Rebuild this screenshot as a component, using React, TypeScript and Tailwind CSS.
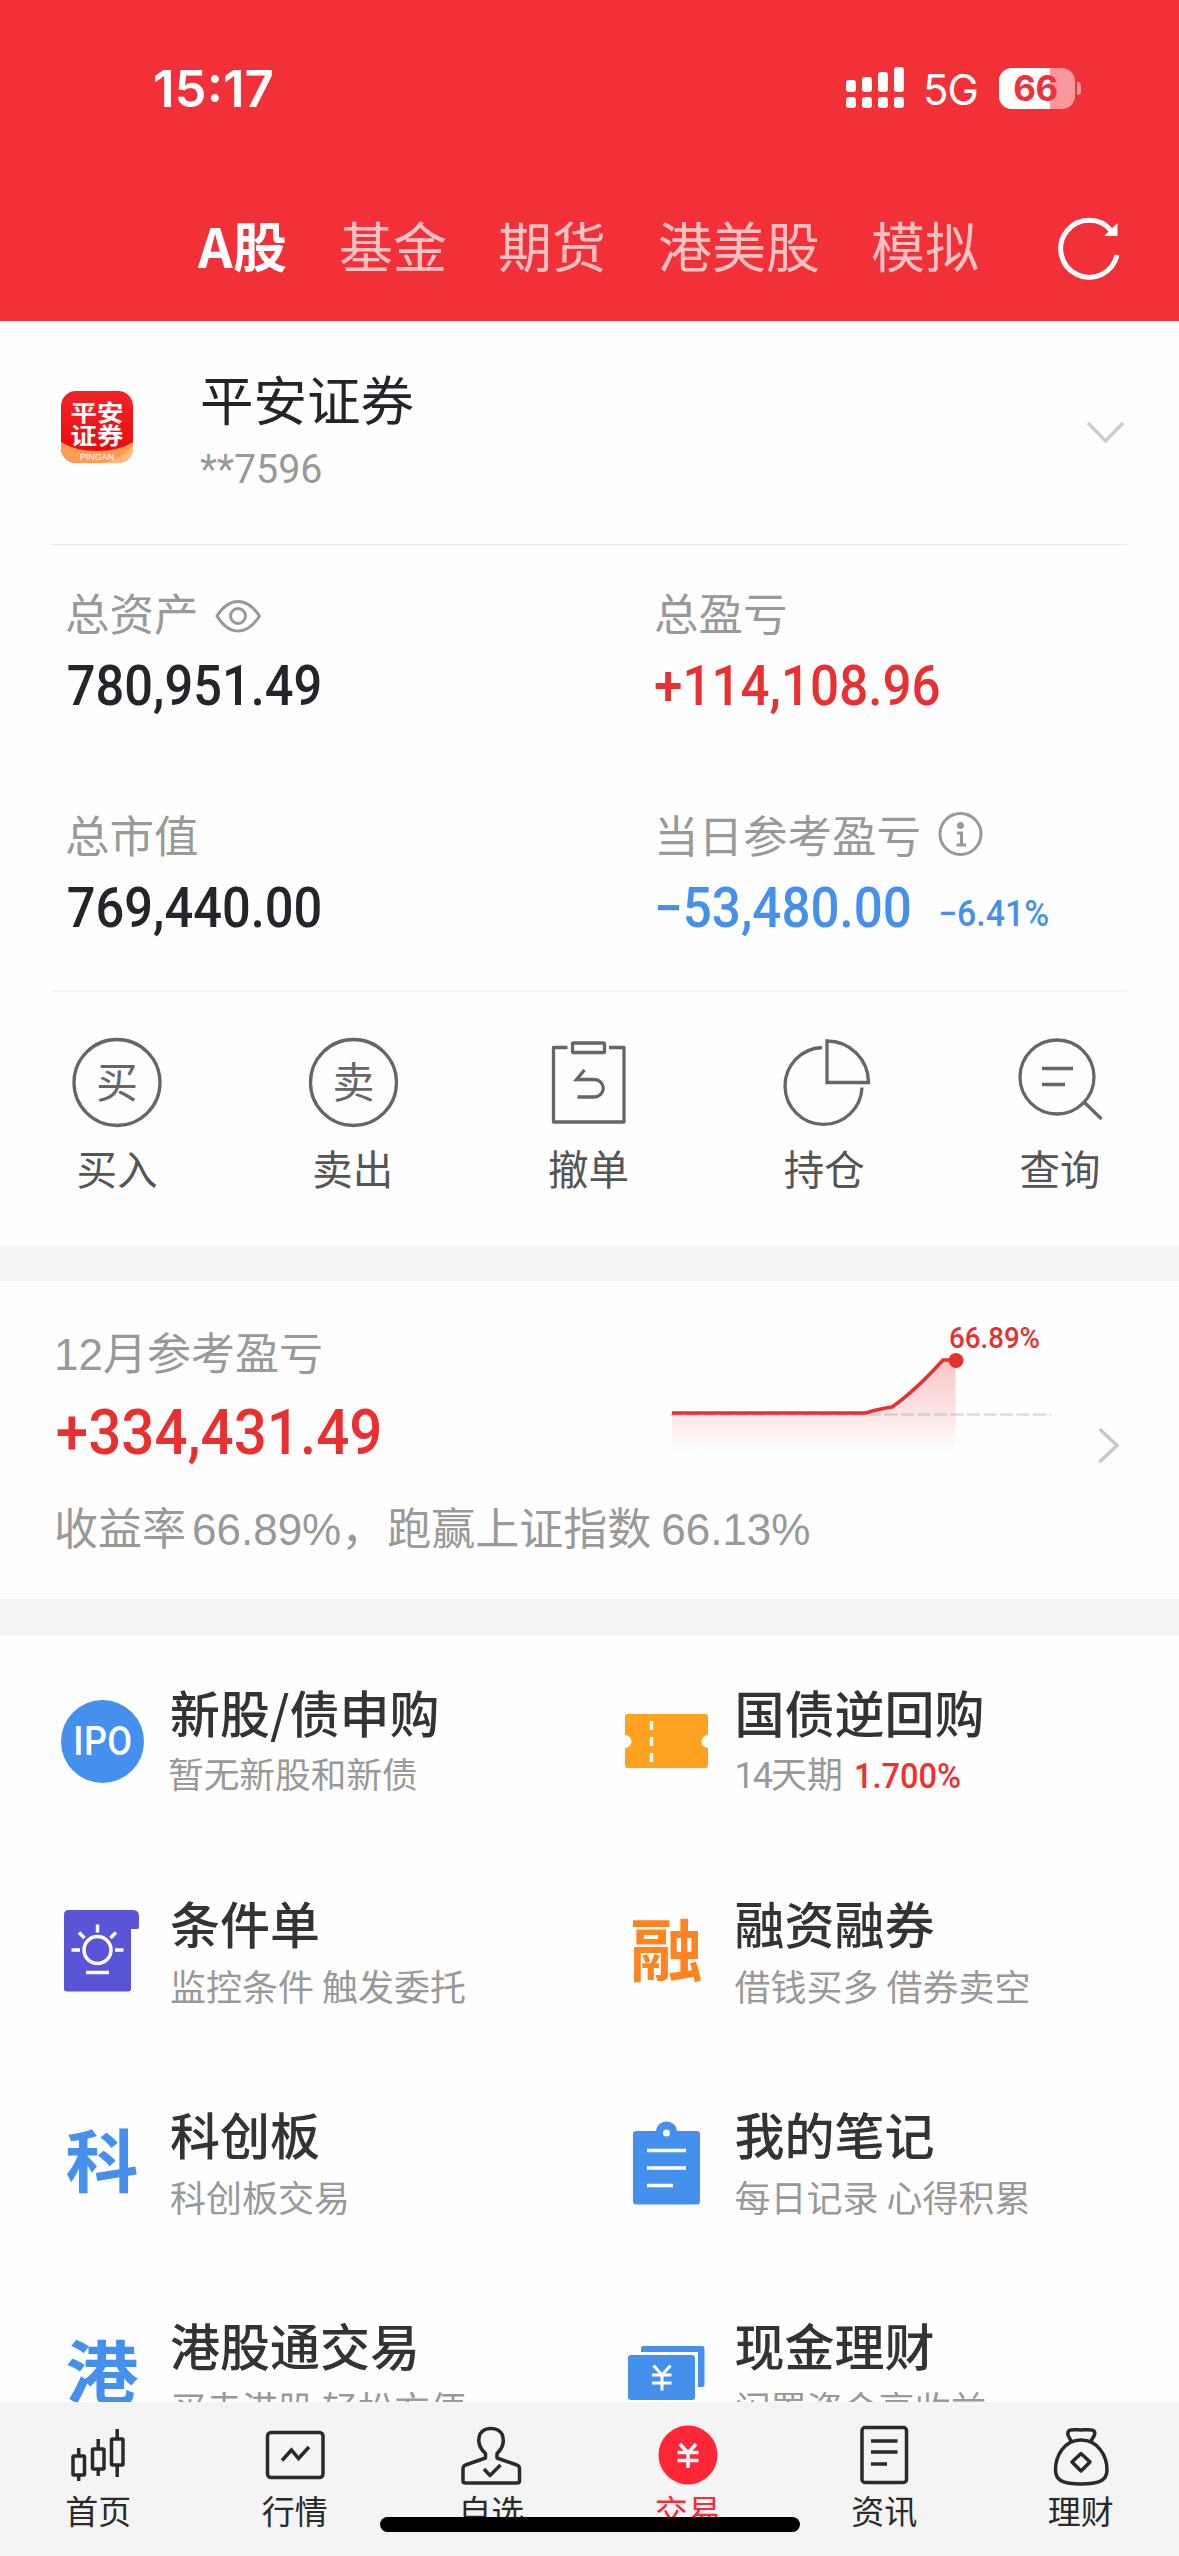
import type { ReactNode } from "react";

const CJK = "font-['Noto_Sans_CJK_SC',sans-serif]";
const DIGITS = "font-['Roboto','Noto_Sans_CJK_SC',sans-serif]";

function StatusBar() {
  return (
    <div className="flex h-[176px] items-center pl-[153px] pr-[98px] font-['Inter',sans-serif] text-white">
      <span className="pt-[2px] text-[51px] font-semibold leading-[60px]">15:17</span>
      <div className="ml-auto flex items-center">
        <svg width="60" height="44" viewBox="845 66 60 44" fill="#fff">
          <rect x="846" y="80" width="10" height="12" rx="3" />
          <rect x="862" y="77" width="10" height="15" rx="3" />
          <rect x="878" y="72" width="10" height="20" rx="3" />
          <rect x="894" y="67" width="10" height="25" rx="3" />
          <rect x="846" y="97" width="10" height="11" rx="3" />
          <rect x="862" y="97" width="10" height="11" rx="3" />
          <rect x="878" y="97" width="10" height="11" rx="3" />
          <rect x="894" y="97" width="10" height="11" rx="3" />
        </svg>
        <span className="ml-[18px] w-[58px] pt-[3px] text-[42px] leading-[48px] tracking-[-1px]">5G</span>
        <div className="relative ml-[18px] h-[41px] w-[76px] overflow-hidden rounded-[13px] bg-white/50">
          <div className="h-full w-[51px] bg-white" />
          <span className="absolute inset-y-0 left-0 w-[73px] text-center text-[35px] font-bold leading-[41px] tracking-[-0.500px] text-[#f13038]">
            66
          </span>
        </div>
        <div className="ml-[2px] h-[13px] w-[4px] rounded-r-full bg-white/50" />
      </div>
    </div>
  );
}

function MarketTabs() {
  return (
    <div className={`flex h-[145px] items-start pl-[198px] pt-[30px] text-[54px] leading-[78px] text-white/70 ${CJK}`}>
      <span className="w-[90px] whitespace-nowrap text-[54px] font-bold tracking-[0.500px] text-white">A股</span>
      <span className="ml-[51px]">基金</span>
      <span className="ml-[51px]">期货</span>
      <span className="ml-[52px]">港美股</span>
      <span className="ml-[51px]">模拟</span>
      <svg className="ml-[77px] mt-[9px]" width="66" height="68" viewBox="1055 215 66 68" fill="none" stroke="#fff" strokeWidth="5">
        <path d="M1110.500 231 A28.500 28.500 0 1 0 1116 255" />
        <path d="M1116.500 223 V236 H1103 Z" fill="#fff" stroke="none" />
      </svg>
    </div>
  );
}

function BrokerLogo() {
  return (
    <div className="relative h-[72px] w-[72px] overflow-hidden rounded-[15px] bg-gradient-to-b from-[#f32226] to-[#ea0008]">
      <svg className="absolute inset-0" width="72" height="72" viewBox="0 0 72 72">
        <path d="M0 51 Q14 60 36 60 Q58 60 72 51 V72 H0 Z" fill="#ff9c50" />
        <path d="M44 72 Q62 68 72 54 V72 Z" fill="#ffbd7d" />
      </svg>
      <div className={`absolute inset-x-0 top-[8px] flex origin-top scale-y-[0.860] flex-col items-center text-[26.500px] font-bold leading-[27px] text-white ${CJK}`}>
        <span>平安</span>
        <span>证券</span>
      </div>
      <div className="absolute inset-x-0 bottom-[1px] text-center font-['Liberation_Sans',sans-serif] text-[9px] leading-[10px] text-white">
        PINGAN
      </div>
    </div>
  );
}

function Account() {
  return (
    <div className="mx-[52px] flex h-[224px] border-b border-[#e8e8e8] pl-[9px]">
      <div className="pt-[70px]">
        <BrokerLogo />
      </div>
      <div className="ml-[67px] pt-[37px]">
        <div className={`text-[53.500px] leading-[80px] text-[#22262b] ${CJK}`}>平安证券</div>
        <div className={`origin-left scale-x-[0.96] text-[41px] leading-[62px] text-[#999] ${DIGITS}`}>**7596</div>
      </div>
      <svg className="ml-auto mr-[1px] mt-[97px]" width="42" height="30" viewBox="1084 418 42 30" fill="none" stroke="#ccc" strokeWidth="3.500">
        <path d="M1088 423 L1105.500 441 L1123 423" />
      </svg>
    </div>
  );
}

function Stat({ label, icon, children }: { label: string; icon?: ReactNode; children: ReactNode }) {
  return (
    <div className="h-[222px]">
      <div className={`flex h-[62px] items-center text-[44.500px] leading-[62px] text-[#999] ${CJK}`}>
        {label}
        {icon}
      </div>
      <div className={`flex h-[87px] items-center whitespace-nowrap text-[55px] font-medium leading-[87px] ${DIGITS}`}>
        {children}
      </div>
    </div>
  );
}

function Assets() {
  return (
    <div className="mx-[52px] h-[447px] border-b-2 border-[#f2f2f2]">
      <div className="grid grid-cols-[589px_1fr] pl-[13px] pt-[36px]">
        <Stat
          label="总资产"
          icon={
            <svg className="ml-[14px] mt-[7px]" width="48" height="38" viewBox="213 597 48 38" fill="none" stroke="#999" strokeWidth="3">
              <path d="M217 616 Q226 601.500 238 601.500 Q250 601.500 259.500 616 Q250 631 238 631 Q226 631 217 616 Z" />
              <circle cx="238" cy="616" r="7.500" />
            </svg>
          }
        >
          <span className="origin-left scale-x-[0.92] pl-[2px] text-[#22262b]">780,951.49</span>
        </Stat>
        <Stat label="总盈亏">
          <span className="origin-left scale-x-[0.93] text-[#e93030]">+114,108.96</span>
        </Stat>
        <Stat label="总市值">
          <span className="origin-left scale-x-[0.92] pl-[2px] text-[#22262b]">769,440.00</span>
        </Stat>
        <Stat
          label="当日参考盈亏"
          icon={
            <svg className="ml-[16px]" width="48" height="48" viewBox="937 810 48 48" fill="none" stroke="#999" strokeWidth="3">
              <circle cx="960.500" cy="834" r="20.500" />
              <circle cx="960.500" cy="825.500" r="3.500" fill="#999" stroke="none" />
              <path d="M957 833 H961.500 V844 M956.500 845 H966" />
            </svg>
          }
        >
          <span className="w-[284px] origin-left scale-x-[0.93] text-[#4590ec]">−53,480.00</span>
          <span className="origin-left scale-x-[0.94] pt-[11px] text-[36px] text-[#4590ec]">−6.41%</span>
        </Stat>
      </div>
    </div>
  );
}

const actions: { label: string; icon: ReactNode }[] = [
  {
    label: "买入",
    icon: (
      <svg width="100" height="100" viewBox="68 1032 100 100" fill="none" stroke="#666" strokeWidth="3.300">
        <circle cx="117" cy="1082.500" r="43" />
        <text x="117" y="1098" textAnchor="middle" fontSize="42" fill="#666" stroke="none">买</text>
      </svg>
    ),
  },
  {
    label: "卖出",
    icon: (
      <svg width="100" height="100" viewBox="304 1032 100 100" fill="none" stroke="#666" strokeWidth="3.300">
        <circle cx="353.500" cy="1082.500" r="43" />
        <text x="353.500" y="1098" textAnchor="middle" fontSize="42" fill="#666" stroke="none">卖</text>
      </svg>
    ),
  },
  {
    label: "撤单",
    icon: (
      <svg width="100" height="100" viewBox="539.500 1032 100 100" fill="none" stroke="#666" strokeWidth="3.300">
        <path d="M568 1047.500 H554 V1122 H624.500 V1047.500 H609.500" strokeLinejoin="round" />
        <rect x="573" y="1043" width="32" height="9.500" rx="1" />
        <path d="M585 1070 L577 1079.500 H595 A8.500 8.500 0 0 1 595 1097 H578" />
      </svg>
    ),
  },
  {
    label: "持仓",
    icon: (
      <svg width="100" height="100" viewBox="775 1032 100 100" fill="none" stroke="#666" strokeWidth="3.300">
        <path d="M822 1047.500 A38.500 38.500 0 1 0 862 1087.500" />
        <path d="M827 1041 V1082.500 H868.500 A41.500 41.500 0 0 0 827 1041 Z" />
      </svg>
    ),
  },
  {
    label: "查询",
    icon: (
      <svg width="100" height="100" viewBox="1011 1032 100 100" fill="none" stroke="#666" strokeWidth="3.300">
        <circle cx="1057" cy="1077" r="37" />
        <path d="M1042 1068.500 H1073 M1042 1084.500 H1065 M1084 1102 L1101.500 1119" />
      </svg>
    ),
  },
];

function QuickActions() {
  return (
    <div className={`grid h-[254px] grid-cols-5 pt-[40px] ${CJK}`}>
      {actions.map((a) => (
        <div key={a.label} className="flex flex-col items-center">
          {a.icon}
          <span className="mt-[6px] pr-[2px] text-[40.500px] leading-[60px] text-[#555]">{a.label}</span>
        </div>
      ))}
    </div>
  );
}

function MonthlyProfit() {
  return (
    <div className="flex h-[318px]">
      <div className="w-[610px] pl-[54px] pt-[43px] font-['Liberation_Sans','Noto_Sans_CJK_SC',sans-serif] text-[44px] text-[#999]">
        <div className="leading-[62px]">12月参考盈亏</div>
        <div className={`origin-left scale-x-[0.925] pl-[2px] text-[63px] font-medium leading-[94px] text-[#e93030] ${DIGITS}`}>
          +334,431.49
        </div>
        <div className="flex whitespace-nowrap pt-[19px] leading-[62px]">
          收益率<span className="ml-[6px]">66.89%</span>，
          <span className="ml-[2px]">跑赢上证指数</span>
          <span className="ml-[10px]">66.13%</span>
        </div>
      </div>
      <svg className="mt-[29px]" width="460" height="180" viewBox="610 1310 460 180" fill="none">
        <defs>
          <linearGradient id="profitFill" x1="0" y1="1360" x2="0" y2="1453" gradientUnits="userSpaceOnUse">
            <stop offset="0" stopColor="#e93030" stopOpacity="0.280" />
            <stop offset="1" stopColor="#e93030" stopOpacity="0" />
          </linearGradient>
        </defs>
        <path d="M670 1414.500 H1051" stroke="#ddd" strokeWidth="2.500" strokeDasharray="13 3.500" />
        <path d="M672 1413 H866 Q876 1409.500 892 1407 Q915 1391 943 1360 H955.500 V1453 H672 Z" fill="url(#profitFill)" />
        <path d="M672 1413 H866 Q876 1409.500 892 1407 Q915 1391 943 1360 H955.500" stroke="#e93030" strokeWidth="3.500" />
        <circle cx="956" cy="1360.500" r="7.500" fill="#e93030" />
        <text x="949" y="1347.500" fontSize="30" fontWeight="500" fill="#e93030" textLength="91" lengthAdjust="spacingAndGlyphs" fontFamily="Roboto, sans-serif">
          66.89%
        </text>
      </svg>
      <svg className="ml-[23px] mt-[142px]" width="30" height="44" viewBox="1094 1423 30 44" fill="none" stroke="#c8c8c8" strokeWidth="3.500">
        <path d="M1100.500 1429 L1118 1445.500 L1100.500 1462" />
      </svg>
    </div>
  );
}

type Feature = { title: string; sub: ReactNode; icon: ReactNode };

function GlyphIcon({ char, color }: { char: string; color: string }) {
  return (
    <span className={`flex h-[100px] w-[100px] items-center justify-center text-[73px] font-bold leading-[80px] ${color}`}>
      <span className="mt-[-12px] scale-y-[0.930]">{char}</span>
    </span>
  );
}

const features: Feature[] = [
  {
    title: "新股/债申购",
    sub: <span className="ml-[-2px] text-[35.700px]">暂无新股和新债</span>,
    icon: (
      <span className="flex h-[100px] w-[100px] items-center justify-center">
        <span className="mr-[-1px] flex h-[83px] w-[83px] items-center justify-center rounded-full bg-[#4590ec] pt-[2px] font-['Roboto',sans-serif] text-[40px] font-medium leading-none text-white">
          <span className="scale-x-[0.900] tracking-[0.500px]">IPO</span>
        </span>
      </span>
    ),
  },
  {
    title: "国债逆回购",
    sub: (
      <>
        <span className="font-['Roboto',sans-serif] tracking-[-2px]">14</span>天期
        <span className="ml-[11px] inline-block origin-left scale-x-[0.930] font-['Roboto',sans-serif] text-[35px] font-medium leading-none text-[#f03030]">
          1.700%
        </span>
      </>
    ),
    icon: (
      <svg width="100" height="100" viewBox="617 1691 100 100">
        <path d="M627 1714 H706 Q708 1714 708 1717 V1735 A6.500 6.500 0 0 0 708 1748 V1765 Q708 1768 706 1768 H627 Q625 1768 625 1765 V1748 A6.500 6.500 0 0 0 625 1735 V1717 Q625 1714 627 1714 Z" fill="#ffa21f" />
        <path d="M651.500 1721 V1730 M651.500 1737 V1746 M651.500 1753 V1762" stroke="#fff" strokeWidth="3.500" />
      </svg>
    ),
  },
  {
    title: "条件单",
    sub: "监控条件 触发委托",
    icon: (
      <svg width="100" height="100" viewBox="52 1902 100 100">
        <path d="M69 1910 H133 Q139 1910 139 1916 V1927 Q139 1929 137 1929 H131 V1989 Q131 1991.500 128.500 1991.500 H67 Q64 1991.500 64 1989 V1915 Q64 1910 69 1910 Z" fill="#5a54d6" />
        <g fill="none" stroke="#fff" strokeWidth="3.500">
          <circle cx="97.500" cy="1950" r="13.500" />
          <path d="M97.500 1924.500 V1932.500 M79 1932.500 L84.500 1938 M116 1932.500 L110.500 1938 M71.500 1950 H80 M115 1950 H123.500 M86 1972.500 H109" />
        </g>
      </svg>
    ),
  },
  { title: "融资融券", sub: "借钱买多 借券卖空", icon: <GlyphIcon char="融" color="text-[#ff8420]" /> },
  { title: "科创板", sub: "科创板交易", icon: <GlyphIcon char="科" color="text-[#4590ec]" /> },
  {
    title: "我的笔记",
    sub: "每日记录 心得积累",
    icon: (
      <svg width="100" height="100" viewBox="617 2112 100 100">
        <path d="M636 2130 H656 A10.500 9.500 0 0 1 677 2130 H697 Q700 2130 700 2133 V2200 Q700 2203.500 697 2203.500 H636 Q633 2203.500 633 2200 V2133 Q633 2130 636 2130 Z" fill="#4590ec" />
        <circle cx="666.500" cy="2132" r="3.500" fill="#fff" />
        <path d="M647 2149.500 H686 M647 2167 H686 M647 2184.500 H673" stroke="#fff" strokeWidth="3.500" />
      </svg>
    ),
  },
  { title: "港股通交易", sub: "买卖港股 轻松方便", icon: <GlyphIcon char="港" color="text-[#4590ec]" /> },
  {
    title: "现金理财",
    sub: "闲置资金享收益",
    icon: (
      <svg width="100" height="100" viewBox="617 2324 100 100" fill="#4590ec">
        <path d="M643 2346 H702 Q704.500 2346 704.500 2349 V2385 Q704.500 2387 702 2387 H698 V2352 H641 V2349 Q641 2346 643 2346 Z" />
        <rect x="628" y="2355" width="67" height="45" rx="3" />
        <path d="M653.500 2365.500 L662 2375 L670.500 2365.500 M652 2375 H671.500 M652 2383 H671.500 M662 2374 V2390.500" fill="none" stroke="#fff" strokeWidth="3" />
      </svg>
    ),
  },
];

function FeatureGrid() {
  return (
    <div className={`h-[767px] overflow-hidden ${CJK}`}>
      <div className="grid grid-cols-[564.5px_1fr] pl-[52px]">
        {features.map((f, i) => (
          <div key={f.title} className="flex h-[211px]">
            <div className="w-[100px] pt-[56px]">{f.icon}</div>
            <div className="ml-[18px] pt-[43px]">
              <div className="text-[50px] font-medium leading-[66px] text-[#333]">{f.title}</div>
              <div className={i < 2 ? "text-[36px] leading-[56px] text-[#999]" : "mt-[2px] text-[36px] leading-[56px] text-[#999]"}>
                {f.sub}
              </div>
            </div>
          </div>
        ))}
      </div>
    </div>
  );
}

const navItems: { label: string; active?: boolean; icon: ReactNode }[] = [
  {
    label: "首页",
    icon: (
      <svg width="80" height="68" viewBox="58 2422 80 68" fill="none" stroke="#2a2a2a" strokeWidth="3.500">
        <rect x="73" y="2456" width="11.500" height="19" rx="1" />
        <rect x="92.500" y="2449" width="11.500" height="20" rx="1" />
        <rect x="111.500" y="2439" width="11.500" height="26" rx="1" />
        <path d="M78.700 2448 V2456 M78.700 2475 V2481 M98.200 2439 V2449 M98.200 2469 V2476 M117.200 2429 V2439 M117.200 2465 V2477" />
      </svg>
    ),
  },
  {
    label: "行情",
    icon: (
      <svg width="80" height="68" viewBox="255 2422 80 68" fill="none" stroke="#2a2a2a" strokeWidth="3.500">
        <rect x="267.500" y="2432.500" width="55.500" height="45" rx="3.500" />
        <path d="M282 2460.500 L291.500 2450 L298.500 2458.500 L309 2447" />
      </svg>
    ),
  },
  {
    label: "自选",
    icon: (
      <svg width="80" height="68" viewBox="451 2422 80 68" fill="none" stroke="#2a2a2a" strokeWidth="3.500" strokeLinejoin="round">
        <path d="M485.500 2458 V2453.500 C477 2446 478.500 2438 480 2434 C484 2426.500 498 2426.500 502 2434 C503.500 2438 505 2446 497 2453.500 V2458 L517 2465 Q519.500 2466 519.500 2468.500 V2481 Q519.500 2483 517 2483 H465.500 Q463 2483 463 2481 V2468.500 Q463 2466 465.500 2465 Z" />
        <path d="M484 2469 L490 2475.500 L500.500 2465" />
      </svg>
    ),
  },
  {
    label: "交易",
    active: true,
    icon: (
      <svg width="80" height="68" viewBox="648 2422 80 68">
        <circle cx="688" cy="2455" r="29.500" fill="#ff2636" />
        <path d="M680 2444 L688 2453 L696 2444 M677.500 2452.500 H698.500 M677.500 2460.500 H698.500 M688 2453 V2468" fill="none" stroke="#fff" strokeWidth="3.500" />
      </svg>
    ),
  },
  {
    label: "资讯",
    icon: (
      <svg width="80" height="68" viewBox="844 2422 80 68" fill="none" stroke="#2a2a2a" strokeWidth="3.500">
        <rect x="862" y="2427.500" width="44.500" height="55" rx="3" />
        <path d="M871 2441 H897.500 M871 2452 H897.500 M871 2464 H887" />
      </svg>
    ),
  },
  {
    label: "理财",
    icon: (
      <svg width="80" height="68" viewBox="1041 2422 80 68" fill="none" stroke="#2a2a2a" strokeWidth="3.500" strokeLinejoin="round">
        <path d="M1071 2441 L1068 2435 C1066.500 2428 1074 2430 1081 2430 C1088 2430 1096.500 2428 1094.500 2435 L1091 2441" />
        <path d="M1081 2440 C1064 2440 1055.500 2456 1055.500 2470 C1055.500 2481 1064 2484 1081 2484 C1098 2484 1107 2481 1107 2470 C1107 2456 1098 2440 1081 2440 Z" />
        <path d="M1081 2453.500 L1090 2462 L1081 2471 L1072 2462 Z" />
      </svg>
    ),
  },
];

function BottomNav() {
  return (
    <div className={`relative grid h-[154px] grid-cols-6 bg-[#f4f4f4] pt-[20px] ${CJK}`}>
      {navItems.map((n) => (
        <div key={n.label} className="flex flex-col items-center">
          {n.icon}
          <span className={n.active ? "text-[33px] leading-[40px] text-[#ff2636]" : "text-[33px] leading-[40px] text-[#2a2a2a]"}>
            {n.label}
          </span>
        </div>
      ))}
      <div className="absolute left-[380px] top-[115px] h-[15px] w-[420px] rounded-full bg-black" />
    </div>
  );
}

export default function App() {
  return (
    <div className="flex h-[2556px] w-[1179px] flex-col overflow-hidden bg-[#fefefe]">
      <header className="h-[321px] bg-[#f13038]">
        <StatusBar />
        <MarketTabs />
      </header>
      <Account />
      <Assets />
      <QuickActions />
      <div className="h-[35px] bg-[#f4f4f4]" />
      <MonthlyProfit />
      <div className="h-[36px] bg-[#f4f4f4]" />
      <FeatureGrid />
      <BottomNav />
    </div>
  );
}
